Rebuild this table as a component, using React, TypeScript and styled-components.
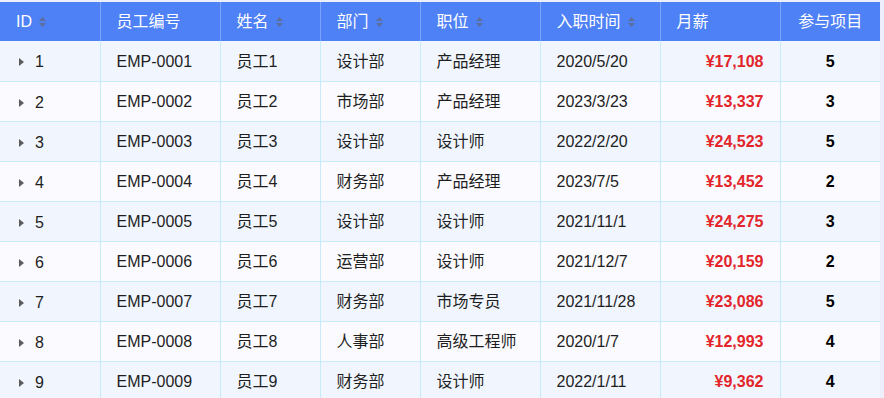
import React from "react";
import styled, { createGlobalStyle } from "styled-components";

const Global = createGlobalStyle`
  html, body { margin: 0; padding: 0; background: #eceefa; }
  body { font-family: "Liberation Sans", Arial, "Noto Sans CJK SC", sans-serif; }
`;

const Frame = styled.div`
  padding-top: 2px;
  width: 884px;
  height: 398px;
  overflow: hidden;
  box-sizing: border-box;
`;

const Table = styled.table`
  width: 880px;
  border-collapse: collapse;
  table-layout: fixed;
  font-size: 16px;
  line-height: 20px;
  font-family: "Liberation Sans", Arial, "Noto Sans CJK SC", sans-serif;
`;

const HeadCell = styled.th<{ $align?: string }>`
  height: 39px;
  padding: 0 16px;
  background: #4e80f6;
  color: #ffffff;
  font-weight: normal;
  text-align: ${(p) => p.$align || "left"};
  border-left: 1px solid #7da3f8;
  white-space: nowrap;
  box-sizing: border-box;
  &:first-child { border-left: none; }
`;

const HeadInner = styled.span`
  display: inline-flex;
  align-items: center;
  gap: 7px;
`;

const SortIcon = () => (
  <svg width="7" height="10" viewBox="0 0 7 10" aria-hidden>
    <path d="M3.5 0 L7 4 L0 4 Z" fill="#5d6f9a" />
    <path d="M0 6 L7 6 L3.5 10 Z" fill="#5d6f9a" />
  </svg>
);

const Row = styled.tr<{ $odd: boolean }>`
  background: ${(p) => (p.$odd ? "#f1f6fe" : "#fbfbff")};
`;

const Cell = styled.td<{ $align?: string }>`
  height: 40px;
  padding: 2px 16px 0;
  color: #1e1e1e;
  text-align: ${(p) => p.$align || "left"};
  border: 1px solid #c7ebf8;
  border-top: none;
  white-space: nowrap;
  box-sizing: border-box;
  &:first-child { border-left: none; }
  &:last-child { border-right: none; }
`;

const IdWrap = styled.span`
  display: inline-flex;
  align-items: center;
  gap: 11px;
  padding-left: 3px;
`;

const Caret = () => (
  <svg width="5" height="8" viewBox="0 0 5 8" aria-hidden>
    <path d="M0 0 L5 4 L0 8 Z" fill="#5c5c5c" />
  </svg>
);

const Salary = styled.span`
  color: #e2262b;
  font-weight: bold;
`;

const Count = styled.span`
  color: #000;
  font-weight: bold;
`;

const rows = [
  { id: 1, dept: "设计部", pos: "产品经理", date: "2020/5/20", pay: "¥17,108", n: 5 },
  { id: 2, dept: "市场部", pos: "产品经理", date: "2023/3/23", pay: "¥13,337", n: 3 },
  { id: 3, dept: "设计部", pos: "设计师", date: "2022/2/20", pay: "¥24,523", n: 5 },
  { id: 4, dept: "财务部", pos: "产品经理", date: "2023/7/5", pay: "¥13,452", n: 2 },
  { id: 5, dept: "设计部", pos: "设计师", date: "2021/11/1", pay: "¥24,275", n: 3 },
  { id: 6, dept: "运营部", pos: "设计师", date: "2021/12/7", pay: "¥20,159", n: 2 },
  { id: 7, dept: "财务部", pos: "市场专员", date: "2021/11/28", pay: "¥23,086", n: 5 },
  { id: 8, dept: "人事部", pos: "高级工程师", date: "2020/1/7", pay: "¥12,993", n: 4 },
  { id: 9, dept: "财务部", pos: "设计师", date: "2022/1/11", pay: "¥9,362", n: 4 },
];

const cols = [
  { w: 100, label: "ID", sort: true },
  { w: 120, label: "员工编号", sort: false },
  { w: 100, label: "姓名", sort: true },
  { w: 100, label: "部门", sort: true },
  { w: 120, label: "职位", sort: true },
  { w: 120, label: "入职时间", sort: true },
  { w: 120, label: "月薪", sort: false },
  { w: 100, label: "参与项目", sort: false, align: "center" },
];

export default function App() {
  return (
    <Frame>
      <Global />
      <Table>
        <colgroup>
          {cols.map((c) => (
            <col key={c.label} style={{ width: c.w }} />
          ))}
        </colgroup>
        <thead>
          <tr>
            {cols.map((c) => (
              <HeadCell key={c.label} $align={c.align}>
                <HeadInner>
                  {c.label}
                  {c.sort && <SortIcon />}
                </HeadInner>
              </HeadCell>
            ))}
          </tr>
        </thead>
        <tbody>
          {rows.map((r, i) => (
            <Row key={r.id} $odd={i % 2 === 0}>
              <Cell>
                <IdWrap>
                  <Caret />
                  {r.id}
                </IdWrap>
              </Cell>
              <Cell>EMP-{String(r.id).padStart(4, "0")}</Cell>
              <Cell>员工{r.id}</Cell>
              <Cell>{r.dept}</Cell>
              <Cell>{r.pos}</Cell>
              <Cell>{r.date}</Cell>
              <Cell $align="right">
                <Salary>{r.pay}</Salary>
              </Cell>
              <Cell $align="center">
                <Count>{r.n}</Count>
              </Cell>
            </Row>
          ))}
        </tbody>
      </Table>
    </Frame>
  );
}
